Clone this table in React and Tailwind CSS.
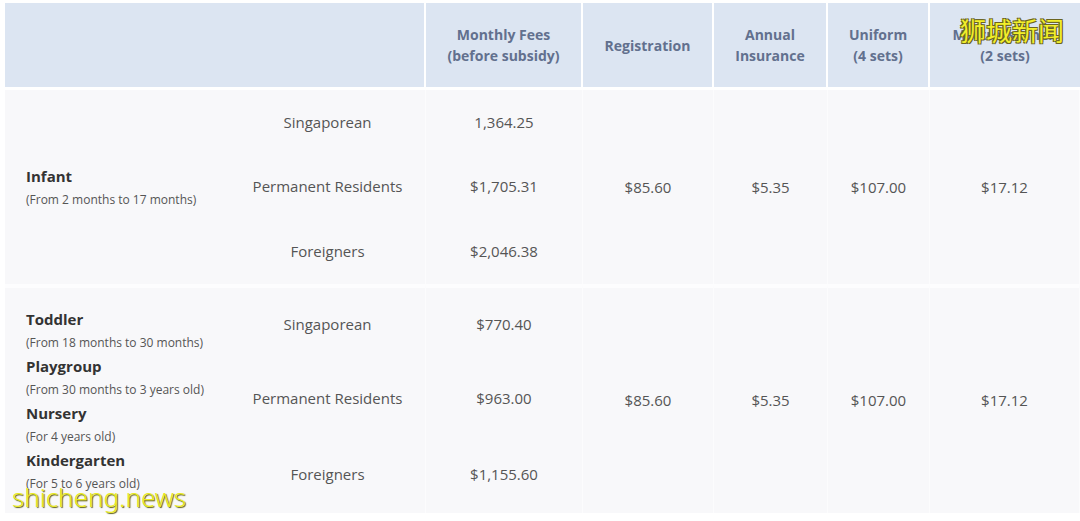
const sections = [
  {
    rowH: ['h-[64px]', 'h-[65px]', 'h-[65px]'],
    groups: [{ title: 'Infant', sub: '(From 2 months to 17 months)' }],
    fees: ['1,364.25', '$1,705.31', '$2,046.38'],
  },
  {
    rowH: ['h-[77px]', 'h-[75px]', 'h-[77px]'],
    groups: [
      { title: 'Toddler', sub: '(From 18 months to 30 months)' },
      { title: 'Playgroup', sub: '(From 30 months to 3 years old)' },
      { title: 'Nursery', sub: '(For 4 years old)' },
      { title: 'Kindergarten', sub: '(For 5 to 6 years old)' },
    ],
    fees: ['$770.40', '$963.00', '$1,155.60'],
  },
];

const nations = ['Singaporean', 'Permanent Residents', 'Foreigners'];
const shared = ['$85.60', '$5.35', '$107.00', '$17.12'];

export default function App() {
  return (
    <div className="relative w-[1080px] h-[521px] overflow-hidden bg-white pl-[5px] pt-[3px] font-['Open_Sans',sans-serif]">
      <table className="w-[1075px] table-fixed border-separate border-spacing-0">
        <colgroup>
          <col className="w-[225px]" />
          <col className="w-[196px]" />
          <col className="w-[157px]" />
          <col className="w-[131px]" />
          <col className="w-[114px]" />
          <col className="w-[102px]" />
          <col />
        </colgroup>
        <thead>
          <tr className="h-[87px] text-[14px] font-semibold leading-[21px] text-[#62708e]">
            <th colSpan={2} className="border-b-[3px] border-r-2 border-white bg-[#dce5f2]"></th>
            <th className="border-b-[3px] border-r-2 border-white bg-[#dce5f2]">Monthly Fees<br />(before subsidy)</th>
            <th className="border-b-[3px] border-r-2 border-white bg-[#dce5f2]">Registration</th>
            <th className="border-b-[3px] border-r-2 border-white bg-[#dce5f2]">Annual<br />Insurance</th>
            <th className="border-b-[3px] border-r-2 border-white bg-[#dce5f2]">Uniform<br />(4 sets)</th>
            <th className="border-b-[3px] border-white bg-[#dce5f2]">Mattress Linen<br />(2 sets)</th>
          </tr>
        </thead>
        {sections.map((s, si) => (
          <tbody key={si}>
            {nations.map((n, ni) => {
              const top = si > 0 && ni === 0 ? 'border-t-[4px] border-t-[#fdfdfe]' : '';
              return (
                <tr key={n} className={`${s.rowH[ni]} text-[15px] text-[#555]`}>
                  {ni === 0 && (
                    <td rowSpan={3} className={`${top} bg-[#f8f8fa] pl-[21px] align-middle`}>
                      <div className="flex flex-col">
                        {s.groups.map((g) => (
                          <div key={g.title} className="flex flex-col">
                            <span className="text-[15px] font-bold leading-[24px] text-[#333]">{g.title}</span>
                            <span className="text-[12px] leading-[23px] text-[#555]">{g.sub}</span>
                          </div>
                        ))}
                      </div>
                    </td>
                  )}
                  <td className={`${top} border-r border-r-[#fcfcfd] bg-[#f8f8fa] text-center`}>{n}</td>
                  <td className={`${top} border-r border-r-[#fcfcfd] bg-[#f8f8fa] text-center`}>{s.fees[ni]}</td>
                  {ni === 0 &&
                    shared.map((v, vi) => (
                      <td key={vi} rowSpan={3} className={`${top} border-r border-r-[#fcfcfd] bg-[#f8f8fa] text-center align-middle`}>
                        {v}
                      </td>
                    ))}
                </tr>
              );
            })}
          </tbody>
        ))}
      </table>

      {/* watermarks */}
      <div className="absolute left-[960px] top-[17px] text-[26px] leading-none text-[#f2ef2a] font-['Noto_Sans_CJK_SC',sans-serif] [text-shadow:1px_1px_0_#6b6420,-1px_-1px_0_#6b6420,1px_-1px_0_#6b6420,-1px_1px_0_#6b6420]">
        狮城新闻
      </div>
      <div className="absolute left-[12px] top-[484px] text-[26px] leading-none text-[#eaea22] font-['Noto_Sans',sans-serif] font-light [text-shadow:1px_1px_1px_#5a5a10]">
        shicheng.news
      </div>
    </div>
  );
}
